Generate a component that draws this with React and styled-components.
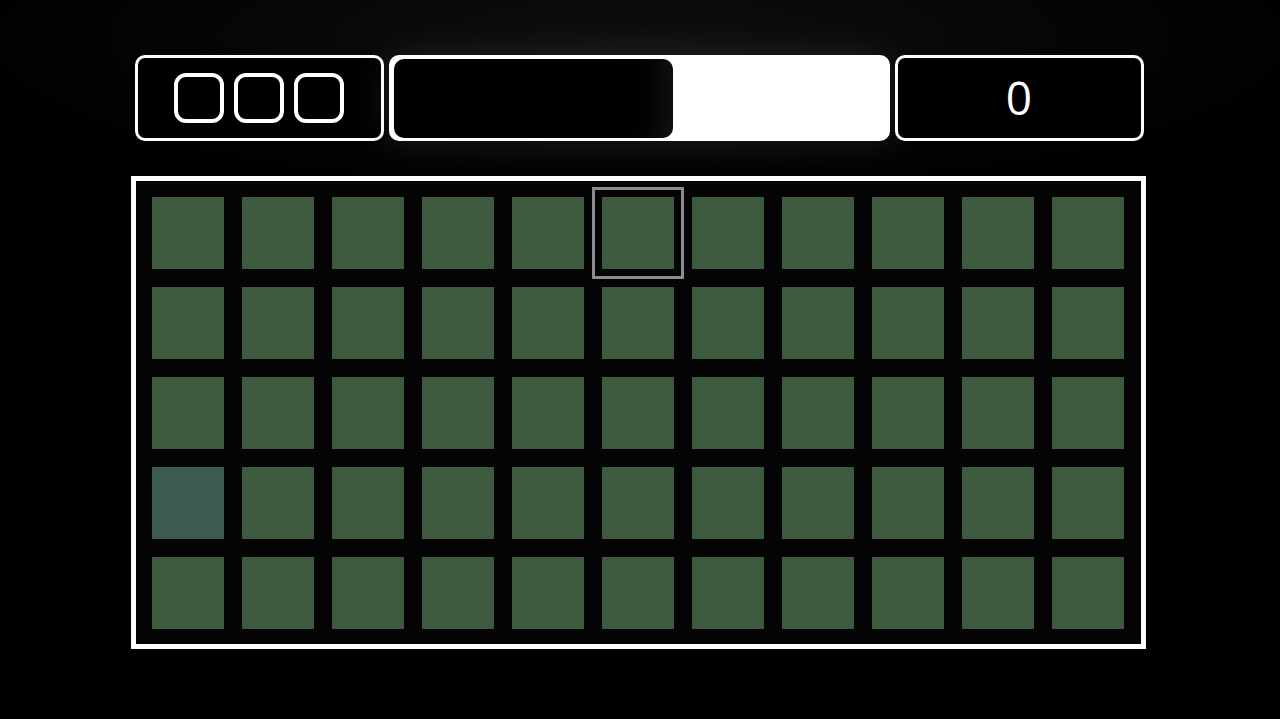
import React from 'react';
import styled, { createGlobalStyle } from 'styled-components';

const GlobalStyle = createGlobalStyle`
  html, body {
    margin: 0;
    padding: 0;
    background: #000;
  }
  body {
    font-family: "Open Sans", "Liberation Sans", sans-serif;
  }
`;

const Page = styled.div`
  min-height: 100vh;
  display: flex;
  flex-direction: column;
  align-items: center;
  padding-top: 55px;
  box-sizing: border-box;
  background: radial-gradient(ellipse 700px 160px at 640px 40px, #0e0e0e 0%, #000 100%);
`;

const TopRow = styled.div`
  display: flex;
  gap: 5px;
  margin-left: -2px;
`;

const Panel = styled.div`
  box-sizing: border-box;
  height: 86px;
  width: ${(p) => p.width}px;
  border: 3px solid #fff;
  border-radius: 10px;
  background: #000;
  display: flex;
  align-items: center;
  justify-content: center;
`;

const Lives = styled.div`
  display: flex;
  gap: 10px;
`;

const Life = styled.div`
  box-sizing: border-box;
  width: 50px;
  height: 50px;
  border: 4px solid #fff;
  border-radius: 12px;
`;

const TimerPanel = styled(Panel)`
  background: #fff;
  justify-content: flex-start;
  padding: 0 2px;
  box-shadow: 0 0 40px rgba(255, 255, 255, 0.1);
`;

const TimerBar = styled.div`
  height: 79px;
  border-radius: 10px;
  background: #000;
  box-shadow: inset -30px 0 30px -20px rgba(255, 255, 255, 0.08);
`;

const Score = styled.span`
  color: #fff;
  font-size: 46px;
  font-weight: 400;
  line-height: 1;
  transform: translateY(-1px);
`;

const Board = styled.div`
  margin-top: 35px;
  margin-left: -3px;
  border: 5px solid #fff;
  background: #050505;
  padding: 16px 17px 15px 16px;
  display: grid;
  grid-template-columns: repeat(11, 72px);
  gap: 18px;
`;

const Cell = styled.div`
  width: 72px;
  height: 72px;
  background: ${(p) => (p.alt ? '#3a5a52' : '#3d5a3e')};
  outline: ${(p) => (p.selected ? '3px solid #8c8c8c' : 'none')};
  outline-offset: 7px;
`;

const cols = 11;
const rows = 5;

export default function App() {
  const progress = 57;
  const cells = Array.from({ length: cols * rows }, (_, i) => i);

  return (
    <>
      <GlobalStyle />
      <Page>
        <TopRow>
          <Panel width={249}>
            <Lives>
              <Life />
              <Life />
              <Life />
            </Lives>
          </Panel>
          <TimerPanel width={501}>
            <TimerBar style={{ width: `${progress}%` }} />
          </TimerPanel>
          <Panel width={249}>
            <Score>0</Score>
          </Panel>
        </TopRow>
        <Board>
          {cells.map((i) => (
            <Cell key={i} selected={i === 5} alt={i === 33} />
          ))}
        </Board>
      </Page>
    </>
  );
}
